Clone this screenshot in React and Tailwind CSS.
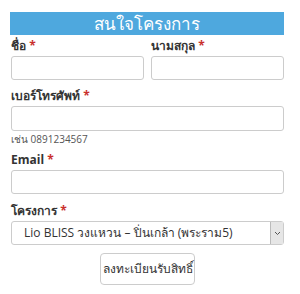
export default function App() {
  const font = { fontFamily: '"Open Sans", "Noto Sans", sans-serif' };
  return (
    <div className="w-[300px] h-[294px] bg-white" style={font}>
      <div className="pl-[10px] pr-[16px] pt-[12px]">
        <div className="h-[23px] bg-[#4ea8de] flex items-center justify-center text-white text-[17px] leading-none">สนใจโครงการ</div>
        <div className="flex gap-[7px] mt-[1px]">
          <div className="flex-1 pl-[1px]">
            <div className="text-[12px] font-bold text-[#333] h-[20px] leading-[20px]">ชื่อ <span className="text-[#c9302c]">*</span></div>
            <div className="h-[24px] border border-[#ccc] rounded-[3px]"></div>
          </div>
          <div className="flex-1">
            <div className="text-[12px] font-bold text-[#333] h-[20px] leading-[20px]">นามสกุล <span className="text-[#c9302c]">*</span></div>
            <div className="h-[24px] border border-[#ccc] rounded-[3px]"></div>
          </div>
        </div>
        <div className="pl-[1px] mt-[6px]">
          <div className="text-[12px] font-bold text-[#333] h-[20px] leading-[20px]">เบอร์โทรศัพท์ <span className="text-[#c9302c]">*</span></div>
          <div className="h-[25px] border border-[#ccc] rounded-[3px]"></div>
          <div className="text-[10px] text-[#555] mt-[1px] h-[14px] leading-[14px]">เช่น 0891234567</div>
          <div className="text-[12px] font-bold text-[#333] h-[20px] leading-[20px] mt-[4px]">Email <span className="text-[#c9302c]">*</span></div>
          <div className="h-[24px] border border-[#ccc] rounded-[3px]"></div>
          <div className="text-[12px] font-bold text-[#333] h-[20px] leading-[20px] mt-[7px]">โครงการ <span className="text-[#c9302c]">*</span></div>
          <div className="h-[24px] border border-[#ccc] rounded-[3px] flex items-stretch">
            <div className="flex-1 flex items-center pl-[12px] text-[12px] text-[#333]">Lio BLISS วงแหวน – ปิ่นเกล้า (พระราม5)</div>
            <div className="w-[13px] bg-[#e6e6e6] border-l border-[#bbb] flex items-center justify-center">
              <svg width="7" height="5" viewBox="0 0 7 5"><path d="M1 1 L3.5 3.5 L6 1" stroke="#555" strokeWidth="1" fill="none" /></svg>
            </div>
          </div>
          <div className="flex justify-center mt-[8px]">
            <div className="w-[95px] h-[32px] border border-[#ccc] rounded-[4px] flex items-center justify-center text-[12px] text-[#333]">ลงทะเบียนรับสิทธิ์</div>
          </div>
        </div>
      </div>
    </div>
  );
}
